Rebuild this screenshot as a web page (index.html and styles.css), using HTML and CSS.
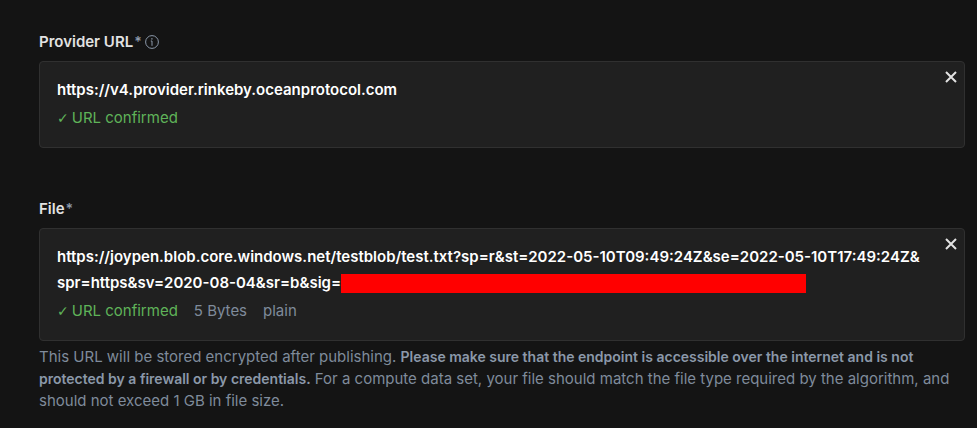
FILE: index.html
```html
<!DOCTYPE html>
<html lang="en">
<head>
<meta charset="utf-8">
<title>Publish</title>
<link rel="stylesheet" href="styles.css">
</head>
<body>
<main class="form">
  <section class="field">
    <h2 class="label">Provider URL<span class="required">*</span>
      <svg class="info" viewBox="0 0 14 14" role="img" aria-label="Info"><circle cx="7" cy="7" r="6.4"/><path d="M5.8 6H7v4.8"/><path class="dot" d="M6.2 3.2h1.4v1.4H6.2z"/></svg>
    </h2>
    <div class="box">
      <h3 class="url">https://v4.provider.rinkeby.oceanprotocol.com</h3>
      <ul class="status"><li class="confirmed"><span class="check">✓</span>URL confirmed</li></ul>
      <button class="remove" type="button" aria-label="Remove provider URL"><svg viewBox="0 0 12 12"><path d="M1 1l10 10M11 1L1 11"/></svg></button>
    </div>
  </section>
  <section class="field">
    <h2 class="label">File<span class="required">*</span></h2>
    <div class="box">
      <h3 class="url">https://joypen.blob.core.windows.net/testblob/test.txt?sp=r&amp;st=2022-05-10T09:49:24Z&amp;se=2022-05-10T17:49:24Z&amp;<wbr>spr=https&amp;sv=2020-08-04&amp;sr=b&amp;sig=<span class="redacted"></span></h3>
      <ul class="status"><li class="confirmed"><span class="check">✓</span>URL confirmed</li><li>5 Bytes</li><li>plain</li></ul>
      <button class="remove" type="button" aria-label="Remove file"><svg viewBox="0 0 12 12"><path d="M1 1l10 10M11 1L1 11"/></svg></button>
    </div>
    <p class="help">This URL will be stored encrypted after publishing. <strong>Please make sure that the endpoint is accessible over the internet and is not protected by a firewall or by credentials.</strong> For a compute data set, your file should match the file type required by the algorithm, and should not exceed 1 GB in file size.</p>
  </section>
</main>
</body>
</html>
```
FILE: styles.css
```css
* { box-sizing: border-box; }

body {
  margin: 0;
  background: #141414;
  color: #e2e2e2;
  font: 15px/22px Inter, "Liberation Sans", sans-serif;
}

.form {
  display: flex;
  flex-direction: column;
  gap: 49px;
  padding: 30px 12px 14px 39px;
}

.label {
  display: flex;
  align-items: center;
  margin: 0 0 7px;
  font-size: 15px;
  font-weight: 600;
  line-height: 24px;
}

.required {
  margin-left: 1px;
  color: #8b98a9;
  font-size: 14px;
}

.info {
  width: 14px;
  height: 14px;
  margin-left: 3px;
  fill: none;
  stroke: #8b98a9;
}

.info .dot {
  fill: #8b98a9;
  stroke: none;
}

.box {
  position: relative;
  padding: 15px 32px 18px 17px;
  border: 1px solid #303030;
  border-radius: 4px;
  background: #202020;
}

.url {
  margin: 0 0 4px;
  color: #fff;
  font-size: 15px;
  font-weight: 600;
  line-height: 26px;
}

.redacted {
  display: inline-block;
  width: 465px;
  height: 19px;
  background: #f00;
  vertical-align: middle;
}

.status {
  display: flex;
  gap: 16px;
  margin: 0;
  padding: 0;
  list-style: none;
  color: #7f8b9b;
}

.confirmed {
  display: flex;
  gap: 3px;
  color: #5fb359;
}

.check { font: 14px/22px "DejaVu Sans", sans-serif; }

.remove {
  position: absolute;
  top: 9px;
  right: 7px;
  display: flex;
  padding: 0;
  border: 0;
  background: none;
  cursor: pointer;
}

.remove svg {
  width: 12px;
  height: 12px;
  fill: none;
  stroke: #e2e2e2;
  stroke-width: 2;
}

.help {
  margin: 5px 0 0;
  color: #7f8b9b;
}

.help strong {
  color: #8b98a9;
  font-size: 14px;
  font-weight: 600;
}
```
